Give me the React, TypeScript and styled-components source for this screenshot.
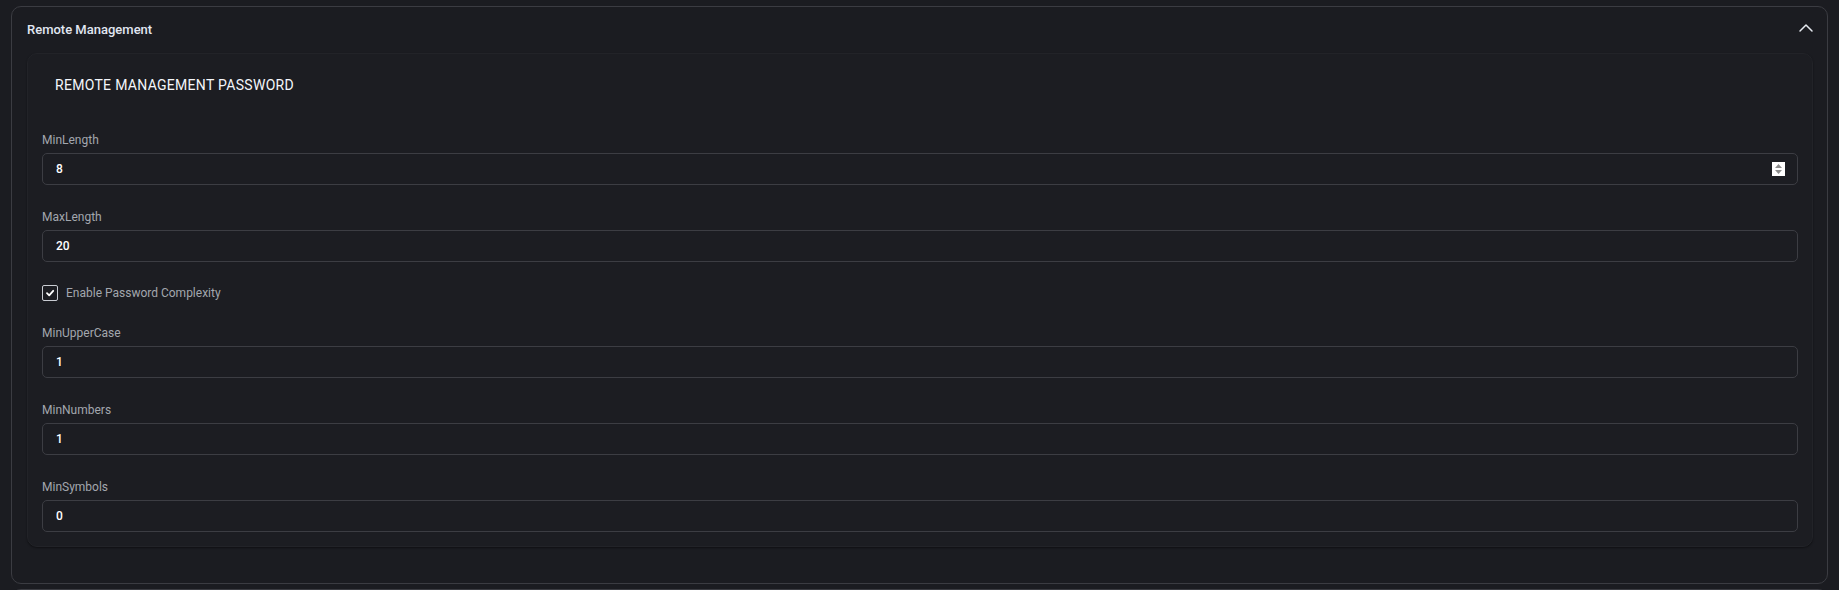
import React from "react";
import styled, { createGlobalStyle } from "styled-components";
import { ChevronUp } from "lucide-react";

const GlobalStyle = createGlobalStyle`
  html, body {
    margin: 0;
    padding: 0;
    background: #1b1c21;
    overflow: hidden;
  }
  body {
    font-family: Roboto, "Liberation Sans", sans-serif;
  }
  * {
    box-sizing: border-box;
  }
`;

type Field = { label: string; value: string; spinner?: boolean };

const topFields: Field[] = [
  { label: "MinLength", value: "8", spinner: true },
  { label: "MaxLength", value: "20" },
];

const complexityFields: Field[] = [
  { label: "MinUpperCase", value: "1" },
  { label: "MinNumbers", value: "1" },
  { label: "MinSymbols", value: "0" },
];

const FieldGroup = ({ field }: { field: Field }) => (
  <StyledField>
    <label>{field.label}</label>
    <div className="box">
      <input type="text" value={field.value} readOnly />
      {field.spinner && (
        <Spinner>
          <svg width="13" height="14" viewBox="0 0 13 14">
            <path d="M6.5 2 L10 6 L3 6 Z" fill="#8c8c8c" />
            <path d="M6.5 12 L10 8 L3 8 Z" fill="#8c8c8c" />
          </svg>
        </Spinner>
      )}
    </div>
  </StyledField>
);

const App = () => {
  return (
    <Page>
      <GlobalStyle />
      <Section>
        <SectionHeader>
          <h3>Remote Management</h3>
          <ChevronUp className="chevron" size={24} strokeWidth={1.5} />
        </SectionHeader>
        <InnerCard>
          <h4>REMOTE MANAGEMENT PASSWORD</h4>
          <Fields>
            {topFields.map((f) => (
              <FieldGroup key={f.label} field={f} />
            ))}
            <CheckRow>
              <span className="check">
                <svg width="10" height="10" viewBox="0 0 10 10">
                  <path
                    d="M2 5.2 L4.2 7.3 L8.2 2.8"
                    fill="none"
                    stroke="#ffffff"
                    strokeWidth="1.8"
                    strokeLinecap="round"
                    strokeLinejoin="round"
                  />
                </svg>
              </span>
              <span>Enable Password Complexity</span>
            </CheckRow>
            {complexityFields.map((f) => (
              <FieldGroup key={f.label} field={f} />
            ))}
          </Fields>
        </InnerCard>
      </Section>
      <Section $collapsed>
        <SectionHeader />
      </Section>
    </Page>
  );
};

export default App;

const Page = styled.div`
  padding: 6px 11px;
  display: flex;
  flex-direction: column;
  gap: 5px;
`;

const Section = styled.section<{ $collapsed?: boolean }>`
  border: 1px solid #3b3c42;
  border-radius: 10px;
  background: #1b1c21;
  padding: ${(p) => (p.$collapsed ? "15px 9px 15px 15px" : "15px 9px 36px 15px")};
  display: flex;
  flex-direction: column;
  gap: 15px;
`;

const SectionHeader = styled.div`
  display: flex;
  align-items: center;
  justify-content: space-between;
  height: 16px;
  h3 {
    margin: 0;
    font-size: 13px;
    line-height: 16px;
    font-weight: 500;
    color: #e1e7f2;
  }
  .chevron {
    color: #e6eaf0;
    margin-top: -4px;
  }
`;

const InnerCard = styled.div`
  margin-right: 5px;
  border: 1px solid #222328;
  border-radius: 10px;
  background: #1c1d22;
  box-shadow: 0 1px 2px rgba(0, 0, 0, 0.45);
  padding: 21px 14px 14px 14px;
  h4 {
    margin: 0 0 37px 13px;
    font-size: 14px;
    line-height: 20px;
    font-weight: 400;
    color: #f4f6fa;
    letter-spacing: 0.3px;
  }
`;

const Fields = styled.div`
  display: flex;
  flex-direction: column;
  gap: 24px;
`;

const StyledField = styled.div`
  display: flex;
  flex-direction: column;
  gap: 5px;
  label {
    font-size: 12px;
    line-height: 16px;
    color: #a3a7ae;
  }
  .box {
    position: relative;
  }
  input {
    width: 100%;
    height: 32px;
    border: 1px solid #3c3d43;
    border-radius: 5px;
    background: #1c1d22;
    color: #ffffff;
    font-family: Roboto, "Liberation Sans", sans-serif;
    font-size: 12px;
    font-weight: 500;
    padding: 0 13px;
    outline: none;
  }
`;

const Spinner = styled.span`
  position: absolute;
  right: 13px;
  top: 9px;
  width: 13px;
  height: 14px;
  background: #ffffff;
  display: flex;
`;

const CheckRow = styled.div`
  display: flex;
  align-items: center;
  gap: 8px;
  margin: -2px 0 -1px;
  font-size: 12px;
  line-height: 18px;
  color: #a3a7ae;
  .check {
    width: 16px;
    height: 16px;
    border: 1px solid #c9ccd2;
    border-radius: 2px;
    display: flex;
    align-items: center;
    justify-content: center;
  }
`;
